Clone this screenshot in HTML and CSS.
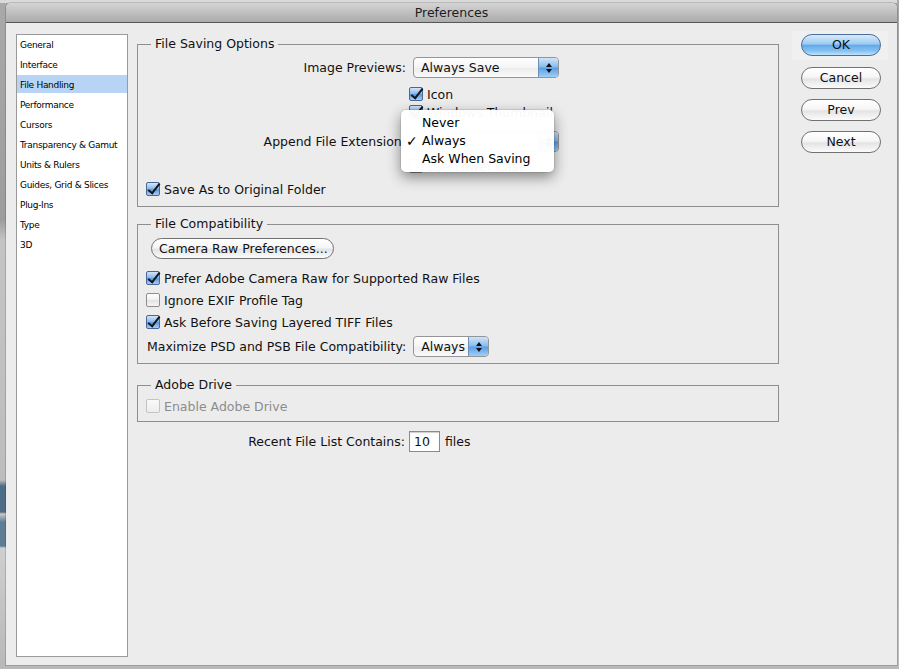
FILE: index.html
```html
<!DOCTYPE html>
<html lang="en">
  <head>
    <meta charset="UTF-8" />
    <title>Preferences</title>
    <link rel="stylesheet" href="styles.css">
  </head>
  <body>
    <div class="window">
      <div class="titlebar">Preferences</div>

      <div class="content">
        <ul class="nav">
          <li>General</li>
          <li>Interface</li>
          <li class="active">File Handling</li>
          <li>Performance</li>
          <li>Cursors</li>
          <li>Transparency &amp; Gamut</li>
          <li>Units &amp; Rulers</li>
          <li>Guides, Grid &amp; Slices</li>
          <li>Plug-Ins</li>
          <li>Type</li>
          <li>3D</li>
        </ul>

        <div class="main">
          <fieldset class="group saving">
            <legend>File Saving Options</legend>

            <div class="row previews">
              <span class="label">Image Previews:</span>
              <span class="select wide">
                <span class="value">Always Save</span>
                <span class="arrows"><i class="up"></i><i class="down"></i></span>
              </span>
            </div>
            <label class="row sub icon-row"><span class="check on"></span>Icon</label>
            <label class="row sub"><span class="check on"></span>Windows Thumbnail</label>
            <div class="row extension">
              <span class="label">Append File Extension:</span>
              <span class="select wide">
                <span class="value">Always</span>
                <span class="arrows"><i class="up"></i><i class="down"></i></span>
              </span>
            </div>
            <label class="row sub lower"><span class="check"></span>Use Lower Case</label>
            <label class="row original"><span class="check on"></span>Save As to Original Folder</label>

            <div class="menu">
              <div class="item">Never</div>
              <div class="item checked">Always</div>
              <div class="item">Ask When Saving</div>
            </div>
          </fieldset>

          <fieldset class="group compat">
            <legend>File Compatibility</legend>
            <div class="row camera"><span class="btn">Camera Raw Preferences...</span></div>
            <label class="row first"><span class="check on"></span>Prefer Adobe Camera Raw for Supported Raw Files</label>
            <label class="row next"><span class="check"></span>Ignore EXIF Profile Tag</label>
            <label class="row next"><span class="check on"></span>Ask Before Saving Layered TIFF Files</label>
            <div class="row maximize">
              <span>Maximize PSD and PSB File Compatibility:</span>
              <span class="select narrow">
                <span class="value">Always</span>
                <span class="arrows"><i class="up"></i><i class="down"></i></span>
              </span>
            </div>
          </fieldset>

          <fieldset class="group drive">
            <legend>Adobe Drive</legend>
            <label class="row disabled"><span class="check off"></span>Enable Adobe Drive</label>
          </fieldset>

          <div class="row recent">
            <span class="label">Recent File List Contains:</span>
            <span class="field">10</span>
            <span class="unit">files</span>
          </div>
        </div>

        <div class="actions">
          <div class="default-ring"><span class="btn ok">OK</span></div>
          <span class="btn">Cancel</span>
          <span class="btn">Prev</span>
          <span class="btn">Next</span>
        </div>
      </div>
    </div>
  </body>
</html>
```

FILE: styles.css
```css
* {
  box-sizing: border-box;
}
body {
  margin: 0;
  width: 899px;
  height: 669px;
  overflow: hidden;
  font-family: "DejaVu Sans", Verdana, sans-serif;
  font-size: 12.5px;
  color: #111;
  background:
    linear-gradient(#a9a9a9, #bdbdbd) right top / 2px 100% no-repeat,
    linear-gradient(#b9b9b9, #b9b9b9) left 665px / 100% 4px no-repeat,
    linear-gradient(
      to bottom,
      #dadada 0,
      #dadada 3px,
      #a9a9a9 3px,
      #9d9d9d 220px,
      #c4c4c4 240px,
      #bdbdbd 480px,
      #4f6c86 486px,
      #4f6c86 512px,
      #c9c9c9 514px,
      #5f7c95 522px,
      #5f7c95 546px,
      #cfcfcf 548px,
      #b8b8b8 669px
    );
  padding: 3px 2px 0 6px;
}
.window {
  width: 891px;
  height: 662px;
  background: #ececec;
  border-radius: 5px 5px 0 0;
  box-shadow: 0 0 0 1px rgba(0, 0, 0, 0.15);
  display: flex;
  flex-direction: column;
}
.titlebar {
  height: 20px;
  line-height: 19px;
  text-align: center;
  color: #1c1c1c;
  background: linear-gradient(#d4d4d4, #ababab);
  border-bottom: 1px solid #575757;
  border-radius: 5px 5px 0 0;
}
.content {
  display: flex;
  padding: 11px 0 0 10px;
}
.nav {
  list-style: none;
  margin: 0;
  padding: 0;
  width: 112px;
  height: 623px;
  background: #fff;
  border: 1px solid #9a9a9a;
  font-size: 9px;
  letter-spacing: -0.3px;
  color: #000;
}
.nav li {
  height: 18px;
  line-height: 20px;
  margin-bottom: 2px;
  padding-left: 3px;
}
.nav li.active {
  background: #b7d4f4;
}
.main {
  width: 642px;
  margin-left: 9px;
}
.group {
  position: relative;
  margin: 2px 0 0;
  padding: 0 0 0 8px;
  border: 1px solid #8e8e8e;
  min-width: 0;
}
.group legend {
  margin-left: 5px;
  padding: 0 4px;
  line-height: 16px;
  height: 16px;
}
.row {
  display: flex;
  align-items: center;
  height: 18px;
  white-space: nowrap;
}
.row .label {
  width: 260px;
  text-align: right;
  margin-right: 7px;
}
.row.sub {
  padding-left: 263px;
}
.check {
  position: relative;
  flex: none;
  width: 14px;
  height: 14px;
  margin-right: 4px;
  border: 1px solid #8d8d8d;
  border-radius: 2px;
  background: linear-gradient(#ffffff, #f1f1f1 50%, #e2e2e2 51%, #f6f6f6);
}
.check.on {
  border-color: #44699a;
  background: linear-gradient(#d3e5f8, #8bb9ea 48%, #5a95dd 52%, #a9cdf3);
}
.check.on::after {
  content: "";
  position: absolute;
  left: 4px;
  top: -2px;
  width: 4px;
  height: 11px;
  border: solid #151515;
  border-width: 0 2.5px 2.5px 0;
  transform: rotate(38deg);
}
.check.off {
  border-color: #c4c4c4;
  background: linear-gradient(#fafafa, #ededed);
}
.disabled {
  color: #8c8c8c;
}
.select {
  display: flex;
  height: 21px;
  border: 1px solid #959595;
  border-radius: 4px;
  background: linear-gradient(#ffffff, #f4f4f4 50%, #ebebeb 51%, #fafafa);
  overflow: hidden;
}
.select.wide {
  width: 146px;
}
.select.narrow {
  width: 76px;
  margin-left: 7px;
}
.select .value {
  flex: 1;
  line-height: 19px;
  padding-left: 7px;
}
.select .arrows {
  width: 20px;
  display: flex;
  flex-direction: column;
  align-items: center;
  justify-content: center;
  gap: 2px;
  border-left: 1px solid #6c8fb9;
  background: linear-gradient(#cfe5fa, #86bbee 48%, #5a9de5 52%, #9ed0f7);
}
.arrows i {
  width: 0;
  height: 0;
  border-left: 3px solid transparent;
  border-right: 3px solid transparent;
}
.arrows .up {
  border-bottom: 4px solid #111;
}
.arrows .down {
  border-top: 4px solid #111;
}

/* File Saving Options rows */
.previews {
  height: 21px;
  margin-top: 5px;
}
.icon-row {
  margin-top: 7px;
}
.extension {
  height: 21px;
  margin-top: 10px;
}
.lower {
  margin-top: 5px;
}
.original {
  margin-top: 5px;
}
.saving {
  padding-bottom: 8px;
}
.menu {
  position: absolute;
  left: 263px;
  top: 58px;
  width: 153px;
  height: 62px;
  padding-top: 4px;
  background: rgba(255, 255, 255, 0.97);
  border-radius: 5px;
  box-shadow: 0 5px 14px rgba(0, 0, 0, 0.45), 0 0 0 1px rgba(0, 0, 0, 0.08);
  z-index: 5;
}
.menu .item {
  position: relative;
  height: 18px;
  line-height: 18px;
  padding-left: 21px;
  color: #000;
}
.menu .item.checked::before {
  content: "\2713";
  position: absolute;
  left: 5px;
  font-size: 14px;
}

/* File Compatibility rows */
.compat {
  margin-top: 9px;
  padding-bottom: 6px;
}
.camera {
  height: 21px;
  margin-top: 6px;
  padding-left: 5px;
}
.btn {
  display: inline-block;
  height: 22px;
  line-height: 20px;
  padding: 0 7px;
  text-align: center;
  border: 1px solid #717171;
  border-radius: 11px;
  background: linear-gradient(#ffffff, #f6f6f6 45%, #e4e4e4 55%, #fbfbfb);
  color: #111;
}
.camera .btn {
  width: 183px;
  height: 21px;
  line-height: 19px;
}
.first {
  margin-top: 10px;
}
.next {
  margin-top: 4px;
}
.maximize {
  height: 21px;
  margin-top: 5px;
  padding-left: 1px;
}

/* Adobe Drive */
.drive {
  margin-top: 13px;
  padding-bottom: 6px;
}
.drive .row {
  margin-top: 4px;
}

.recent {
  height: 21px;
  margin-top: 9px;
}
.recent .label {
  width: 268px;
  margin-right: 4px;
}
.field {
  width: 31px;
  height: 21px;
  line-height: 19px;
  padding-left: 4px;
  background: #fff;
  border: 1px solid #8b8b8b;
  box-shadow: inset 0 1px 1px rgba(0, 0, 0, 0.2);
}
.unit {
  margin-left: 5px;
}

/* Buttons column */
.actions {
  display: flex;
  flex-direction: column;
  align-items: flex-start;
  margin-left: 13px;
  margin-top: -3px;
}
.default-ring {
  padding: 3px 7px 4px 9px;
  background: #f0f0f0;
}
.actions .btn {
  width: 80px;
  height: 22px;
}
.actions > .btn {
  margin-left: 9px;
  margin-top: 10px;
}
.default-ring + .btn {
  margin-top: 7px;
}
.btn.ok {
  border-color: #4a6e9e;
  background: linear-gradient(#d7ebfc, #9ccbf2 45%, #63a9ea 52%, #86c3f3 80%, #bfe3fc);
}
```
